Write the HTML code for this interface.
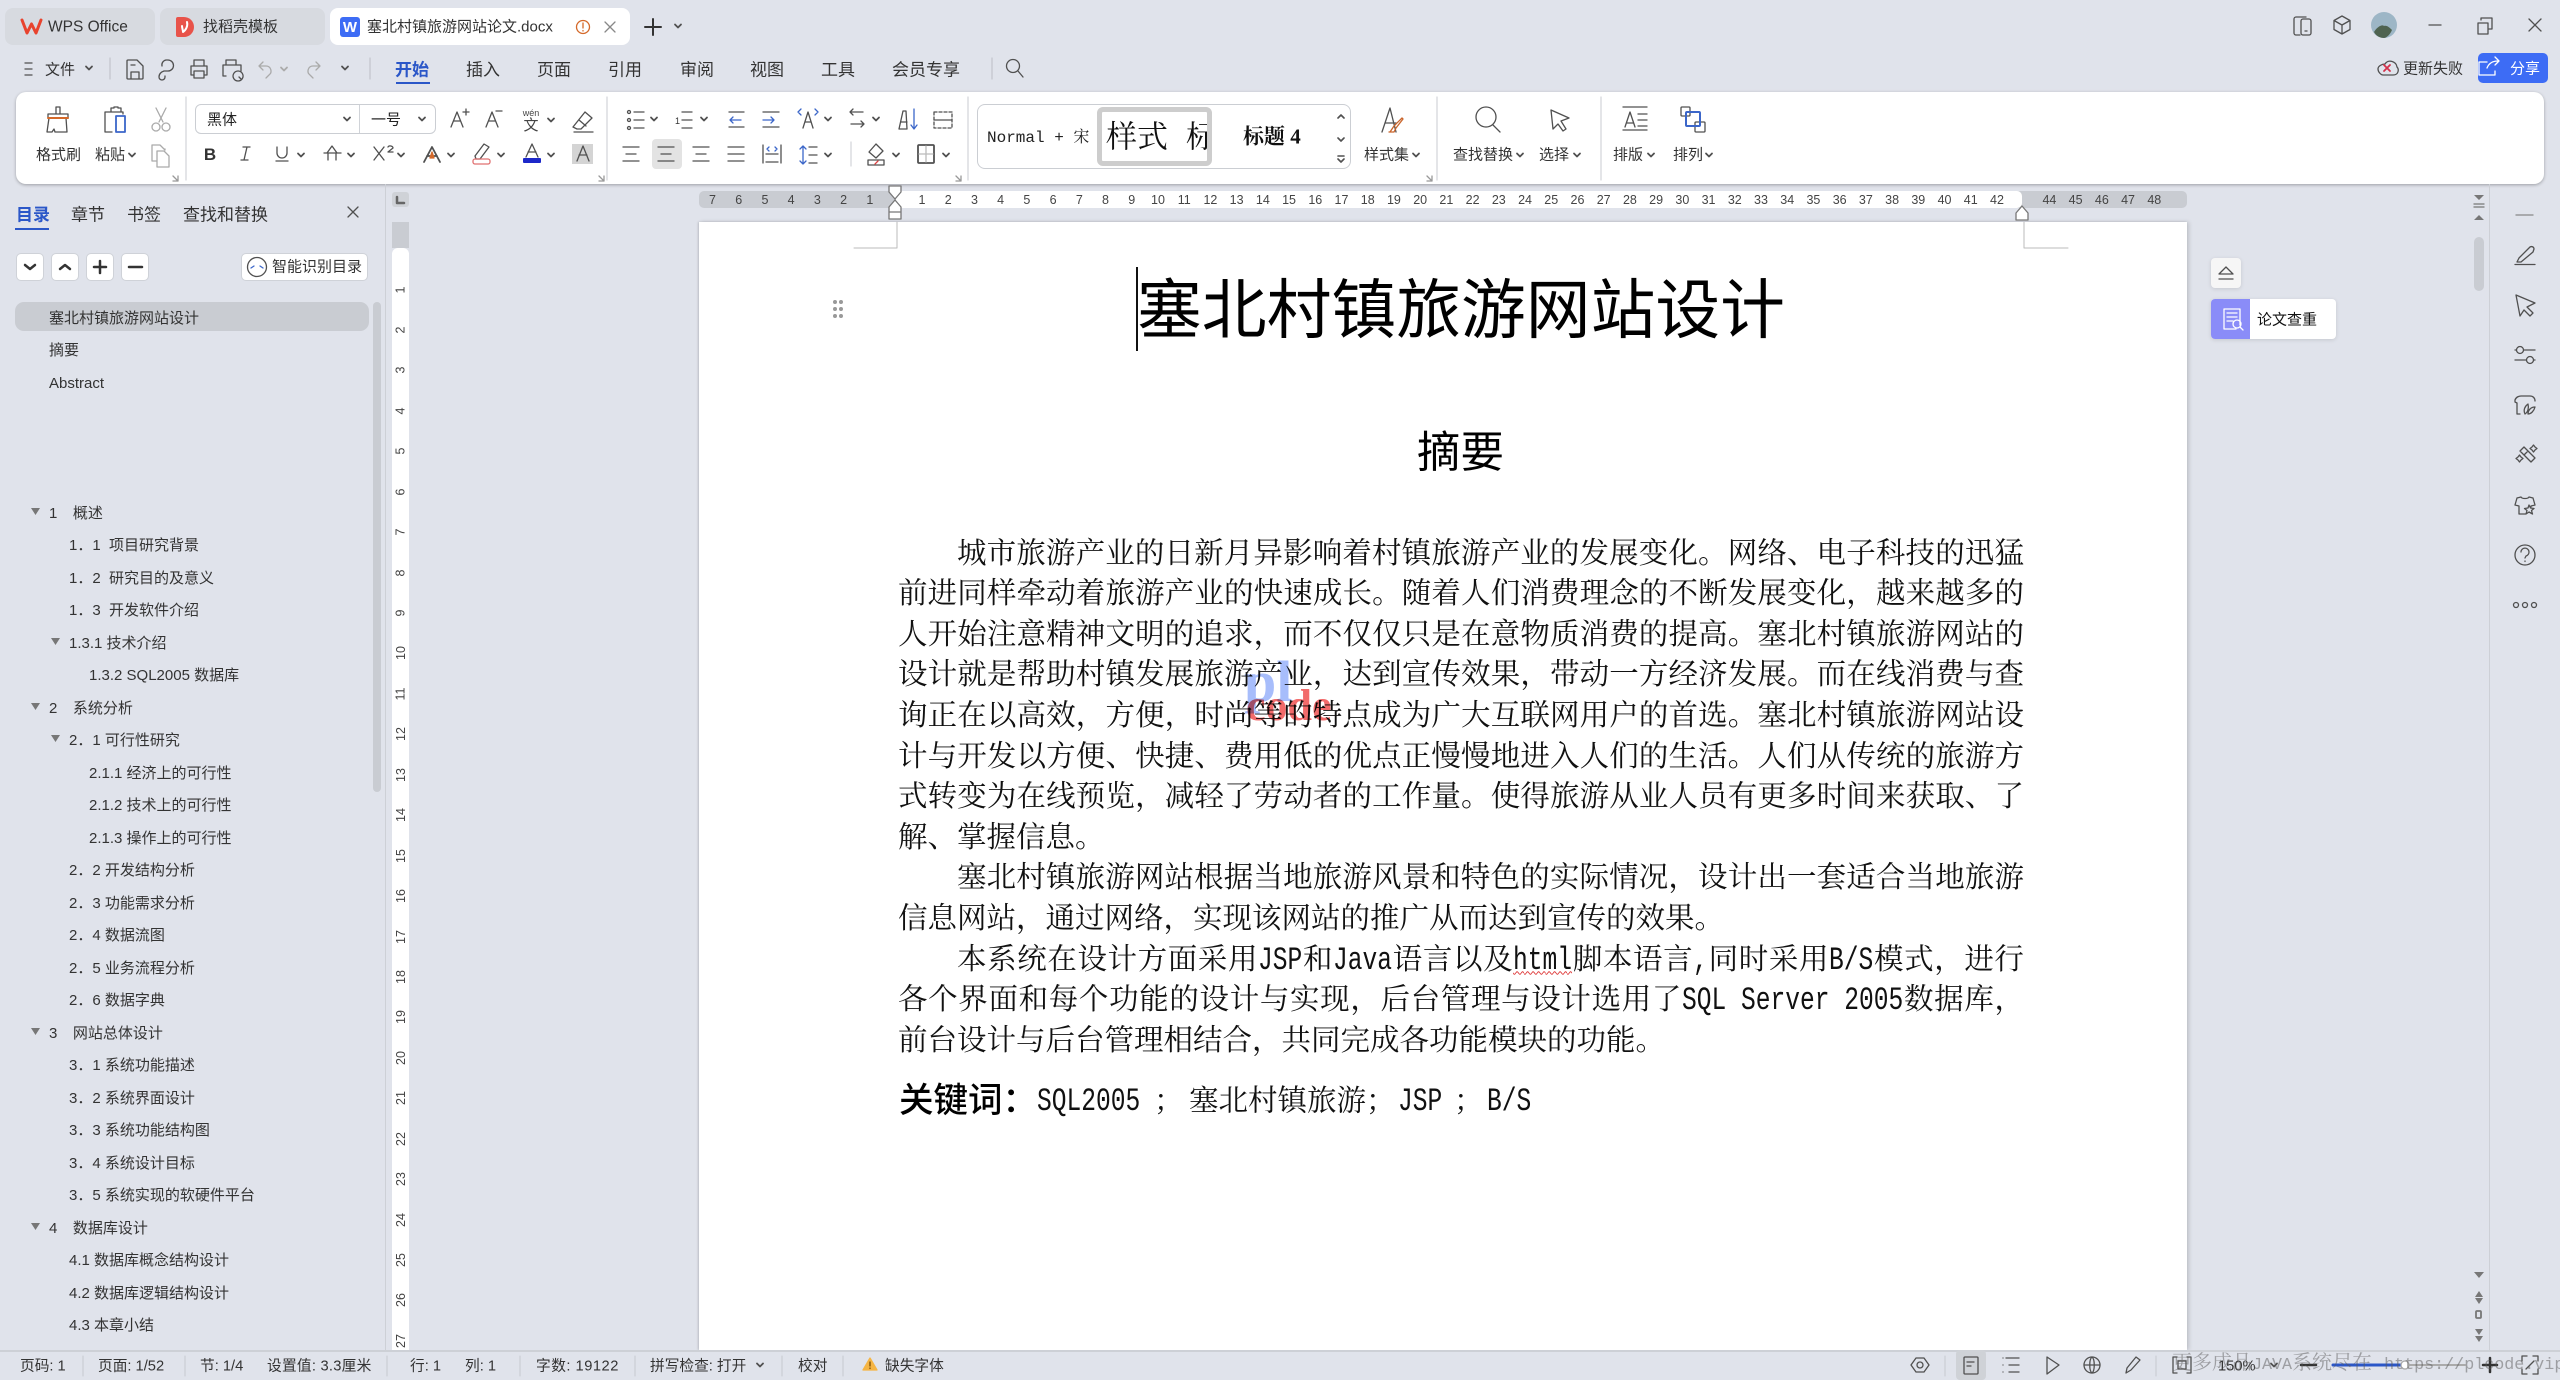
<!DOCTYPE html>
<html lang="zh"><head><meta charset="utf-8"><title>塞北村镇旅游网站论文.docx</title>
<style>
*{box-sizing:border-box}
html,body{margin:0;padding:0;width:2560px;height:1380px;overflow:hidden;background:#e0e3eb;font-family:"Liberation Sans","Noto Sans CJK SC",sans-serif;color:#333}
.a{position:absolute}
.t{position:absolute;white-space:nowrap;line-height:1;transform:translateY(-50%);font-size:15px;color:#333}
.m{font-size:17px}
.tab{position:absolute;top:8px;height:37px;border-radius:8px;background:#d7dae0}
#ribbon{position:absolute;left:16px;top:92px;width:2528px;height:92px;background:#fff;border-radius:10px;box-shadow:0 1px 3px rgba(0,0,0,.3)}
.dv{position:absolute;width:1px;background:#d0d3d8}
.btn{position:absolute;top:253px;width:28px;height:28px;background:#fff;border:1px solid #cfd2d8;border-radius:5px}
#toc{position:absolute;left:0;top:302.500px;width:370px;font-size:15px;line-height:32.5px;color:#333;height:1047px;overflow:hidden}
#toc div{height:32.5px;white-space:pre}
#toc i{font-style:normal;margin-left:15.5px}
.l0{padding-left:49px}.l1{padding-left:69px}.l2{padding-left:89px}
.rh{position:absolute;left:699px;top:191px;width:1488px;height:17px;background:#c9ccd2;border-radius:5px}
.nums{position:absolute;top:192px;height:17px;display:flex;font-size:12.5px;line-height:17px;color:#444}
.nums span{width:26.22px;flex:none;text-align:center}
#vnums{position:absolute;left:392px;top:269.3px;width:17px;font-size:12.5px;color:#444}
#vnums span{display:flex;height:40.45px;width:17px;align-items:center;justify-content:center}
#vnums i{font-style:normal;display:block;transform:rotate(-90deg)}
#page{position:absolute;left:699px;top:222px;width:1488px;height:1128px;background:#fff;box-shadow:-1px 0 2px rgba(0,0,0,.15),2px 0 4px rgba(0,0,0,.15)}
.ln{position:absolute;left:898px;width:1126px;height:40.6px;line-height:40.6px;font-size:29.5px;font-family:"Liberation Serif","Noto Serif CJK SC",serif;color:#111;white-space:nowrap;z-index:3}
.j{text-align:justify;text-align-last:justify;text-justify:inter-character;white-space:normal}
.ln b,.kw b{display:inline-block;font-family:"Liberation Mono",monospace;font-weight:400;font-size:32px;line-height:1;white-space:pre;transform:scaleX(.768);transform-origin:0 50%;text-align:left;text-align-last:left}
.hei{font-family:"Liberation Sans","Noto Sans CJK SC",sans-serif;color:#000}
.kw{position:absolute;top:1101.500px;transform:translateY(-50%);line-height:1;font-size:29.5px;font-family:"Liberation Serif","Noto Serif CJK SC",serif;color:#111;z-index:3;white-space:nowrap}
#status{position:absolute;left:0;top:1350px;width:2560px;height:30px;background:#e0e3eb;border-top:2px solid #cdd0d6;z-index:5}
.s{top:1367px;font-size:14.7px;z-index:6}
svg.o{position:absolute;left:0;top:0;z-index:7;pointer-events:none}
</style></head><body>

<div class="tab" style="left:5px;width:150px"></div>
<div class="tab" style="left:160px;width:165px"></div>
<div class="tab" style="left:330px;width:300px;background:#fff"></div>
<span class="t" style="left:48px;top:27px;font-size:15.5px">WPS Office</span>
<span class="t" style="left:203px;top:27px">找稻壳模板</span>
<span class="t" style="left:367px;top:27px">塞北村镇旅游网站论文.docx</span>

<span class="t" style="left:45px;top:69.500px">文件</span>
<span class="t m" style="left:395px;top:69.500px;color:#2b57c8;font-weight:700">开始</span>
<div class="a" style="left:396px;top:82px;width:34px;height:2px;background:#2b57c8"></div>
<span class="t m" style="left:466px;top:69.500px">插入</span>
<span class="t m" style="left:537px;top:69.500px">页面</span>
<span class="t m" style="left:608px;top:69.500px">引用</span>
<span class="t m" style="left:680px;top:69.500px">审阅</span>
<span class="t m" style="left:750px;top:69.500px">视图</span>
<span class="t m" style="left:821px;top:69.500px">工具</span>
<span class="t m" style="left:892px;top:69.500px">会员专享</span>
<span class="t" style="left:2403px;top:69px">更新失败</span>
<div class="a" style="left:2478px;top:53px;width:70px;height:30px;border-radius:5px;background:#3d6cf5"></div>
<span class="t" style="left:2510px;top:69px;color:#fff">分享</span>

<div id="ribbon"></div>
<div class="a" style="left:195px;top:104px;width:241px;height:30px;border:1px solid #cbced3;border-radius:6px"></div>
<div class="dv" style="left:359px;top:105px;height:28px"></div>
<span class="t" style="left:207px;top:120px;color:#222">黑体</span>
<span class="t" style="left:371px;top:120px;color:#222">一号</span>
<span class="t" style="left:36px;top:155px">格式刷</span>
<span class="t" style="left:95px;top:155px">粘贴</span>
<div class="a" style="left:652px;top:139px;width:30px;height:30px;background:#e3e3e3;border-radius:4px"></div>
<div class="a" style="left:572px;top:144px;width:21px;height:20px;background:#d4d4d4"></div>
<div class="a" style="left:977px;top:104px;width:374px;height:65px;border:1px solid #cbced3;border-radius:8px"></div>
<span class="t" style="left:987px;top:138px;font-family:'Liberation Mono','Noto Serif CJK SC',monospace;font-size:16px;color:#222">Normal + 宋</span>
<div class="a" style="left:1097px;top:107px;width:115px;height:59px;border:5px solid #cdcdcd;border-radius:6px;overflow:hidden">
 <span class="t" style="left:4px;top:25px;font-family:'Liberation Serif','Noto Serif CJK SC',serif;font-size:31px;color:#111">样式</span>
 <span class="t" style="left:84px;top:25px;font-family:'Liberation Serif','Noto Serif CJK SC',serif;font-size:31px;color:#111">标</span>
</div>
<span class="t" style="left:1243px;top:137px;font-family:'Liberation Serif','Noto Serif CJK SC',serif;font-size:21px;font-weight:700;color:#111">标题 4</span>
<span class="t" style="left:1364px;top:155px">样式集</span>
<span class="t" style="left:1453px;top:155px">查找替换</span>
<span class="t" style="left:1539px;top:155px">选择</span>
<span class="t" style="left:1613px;top:155px">排版</span>
<span class="t" style="left:1673px;top:155px">排列</span>

<!-- left pane -->
<div class="a" style="left:385px;top:184px;width:1px;height:1166px;background:#cdd0d6"></div>
<span class="t" style="left:16px;top:214.500px;font-size:17px;color:#2b57c8;font-weight:700">目录</span>
<div class="a" style="left:15px;top:228px;width:34px;height:2px;background:#2b57c8"></div>
<span class="t" style="left:71px;top:214.500px;font-size:17px">章节</span>
<span class="t" style="left:127px;top:214.500px;font-size:17px">书签</span>
<span class="t" style="left:183px;top:214.500px;font-size:17px">查找和替换</span>
<div class="btn" style="left:16px"></div><div class="btn" style="left:51px"></div><div class="btn" style="left:86px"></div><div class="btn" style="left:121px"></div>
<div class="btn" style="left:241px;width:127px"></div>
<span class="t" style="left:272px;top:267px;font-size:15px">智能识别目录</span>
<div class="a" style="left:15px;top:302px;width:354px;height:29px;background:#c9ccd2;border-radius:9px"></div>
<div class="a" style="left:373px;top:302px;width:8px;height:490px;background:#c9ccd2;border-radius:4px"></div>
<div id="toc">
<div class="l0">塞北村镇旅游网站设计</div>
<div class="l0">摘要</div>
<div class="l0">Abstract</div>
<div></div><div></div><div></div>
<div class="l0">1<i>概述</i></div>
<div class="l1">1．1  项目研究背景</div>
<div class="l1">1．2  研究目的及意义</div>
<div class="l1">1．3  开发软件介绍</div>
<div class="l1">1.3.1 技术介绍</div>
<div class="l2">1.3.2 SQL2005 数据库</div>
<div class="l0">2<i>系统分析</i></div>
<div class="l1">2．1 可行性研究</div>
<div class="l2">2.1.1 经济上的可行性</div>
<div class="l2">2.1.2 技术上的可行性</div>
<div class="l2">2.1.3 操作上的可行性</div>
<div class="l1">2．2 开发结构分析</div>
<div class="l1">2．3 功能需求分析</div>
<div class="l1">2．4 数据流图</div>
<div class="l1">2．5 业务流程分析</div>
<div class="l1">2．6 数据字典</div>
<div class="l0">3<i>网站总体设计</i></div>
<div class="l1">3．1 系统功能描述</div>
<div class="l1">3．2 系统界面设计</div>
<div class="l1">3．3 系统功能结构图</div>
<div class="l1">3．4 系统设计目标</div>
<div class="l1">3．5 系统实现的软硬件平台</div>
<div class="l0">4<i>数据库设计</i></div>
<div class="l1">4.1 数据库概念结构设计</div>
<div class="l1">4.2 数据库逻辑结构设计</div>
<div class="l1">4.3 本章小结</div>
</div>

<!-- vertical ruler -->
<div class="a" style="left:392px;top:192px;width:17px;height:15px;background:#cfd2d7;border-radius:3px"></div>
<div class="a" style="left:392px;top:222px;width:17px;height:26px;background:#c9ccd2"></div>
<div class="a" style="left:392px;top:248px;width:17px;height:1102px;background:#fff;border-radius:6px 6px 0 0"></div>
<div id="vnums"><span><i>1</i></span><span><i>2</i></span><span><i>3</i></span><span><i>4</i></span><span><i>5</i></span><span><i>6</i></span><span><i>7</i></span><span><i>8</i></span><span><i>9</i></span><span><i>10</i></span><span><i>11</i></span><span><i>12</i></span><span><i>13</i></span><span><i>14</i></span><span><i>15</i></span><span><i>16</i></span><span><i>17</i></span><span><i>18</i></span><span><i>19</i></span><span><i>20</i></span><span><i>21</i></span><span><i>22</i></span><span><i>23</i></span><span><i>24</i></span><span><i>25</i></span><span><i>26</i></span><span><i>27</i></span></div>

<!-- horizontal ruler -->
<div class="rh"></div>
<div class="a" style="left:896px;top:191px;width:1126px;height:17px;background:#fff;border-radius:0 5px 5px 0"></div>
<div class="nums" style="left:699.4px"><span>7</span><span>6</span><span>5</span><span>4</span><span>3</span><span>2</span><span>1</span></div>
<div class="nums" style="left:908.9px"><span>1</span><span>2</span><span>3</span><span>4</span><span>5</span><span>6</span><span>7</span><span>8</span><span>9</span><span>10</span><span>11</span><span>12</span><span>13</span><span>14</span><span>15</span><span>16</span><span>17</span><span>18</span><span>19</span><span>20</span><span>21</span><span>22</span><span>23</span><span>24</span><span>25</span><span>26</span><span>27</span><span>28</span><span>29</span><span>30</span><span>31</span><span>32</span><span>33</span><span>34</span><span>35</span><span>36</span><span>37</span><span>38</span><span>39</span><span>40</span><span>41</span><span>42</span><span></span><span>44</span><span>45</span><span>46</span><span>47</span><span>48</span></div>

<!-- page -->
<div id="page"></div>
<div class="a" style="left:1244px;top:653px;font:700 58px/1 'Liberation Serif',serif;color:#a7bdfb;z-index:4;mix-blend-mode:multiply">pl</div>
<div class="a" style="left:1246px;top:684px;font:700 44px/1 'Liberation Serif',serif;color:#f26b6b;z-index:4;mix-blend-mode:multiply">code</div>
<div class="a" style="left:1136px;top:267px;width:2px;height:84px;background:#111;z-index:3"></div>
<span class="t hei" style="left:1137px;top:310.500px;font-size:64.8px;z-index:3">塞北村镇旅游网站设计</span>
<span class="t hei" style="left:1417px;top:453.500px;font-size:43.5px;z-index:3">摘要</span>

<div class="ln j" style="top:533.500px;left:957px;width:1067px">城市旅游产业的日新月异影响着村镇旅游产业的发展变化。网络、电子科技的迅猛</div>
<div class="ln j" style="top:574.1px">前进同样牵动着旅游产业的快速成长。随着人们消费理念的不断发展变化，越来越多的</div>
<div class="ln j" style="top:614.7px">人开始注意精神文明的追求，而不仅仅只是在意物质消费的提高。塞北村镇旅游网站的</div>
<div class="ln j" style="top:655.3px">设计就是帮助村镇发展旅游产业，达到宣传效果，带动一方经济发展。而在线消费与查</div>
<div class="ln j" style="top:695.9px">询正在以高效，方便，时尚等的特点成为广大互联网用户的首选。塞北村镇旅游网站设</div>
<div class="ln j" style="top:736.5px">计与开发以方便、快捷、费用低的优点正慢慢地进入人们的生活。人们从传统的旅游方</div>
<div class="ln j" style="top:777.1px">式转变为在线预览，减轻了劳动者的工作量。使得旅游从业人员有更多时间来获取、了</div>
<div class="ln" style="top:817.7px">解、掌握信息。</div>
<div class="ln j" style="top:858.3px;left:957px;width:1067px">塞北村镇旅游网站根据当地旅游风景和特色的实际情况，设计出一套适合当地旅游</div>
<div class="ln" style="top:898.9px">信息网站，通过网络，实现该网站的推广从而达到宣传的效果。</div>
<div class="ln j" style="top:939.5px;left:957px;width:1067px">本系统在设计方面采用<b style="margin-right:-13.35px">JSP</b>和<b style="margin-right:-17.8px">Java</b>语言以及<b style="margin-right:-17.8px;text-decoration:underline wavy #d33 1px;text-underline-offset:2px">html</b>脚本语言<b style="margin-right:-4.45px">,</b>同时采用<b style="margin-right:-13.35px">B/S</b>模式，进行</div>
<div class="ln j" style="top:980.1px">各个界面和每个功能的设计与实现，后台管理与设计选用了<b style="margin-right:-66.75px">SQL Server 2005</b>数据库，</div>
<div class="ln" style="top:1020.7px">前台设计与后台管理相结合，共同完成各功能模块的功能。</div>

<span class="t hei" style="left:899px;top:1100.500px;font-size:34.5px;font-weight:500;z-index:3">关键词：</span>
<span class="kw" style="left:1037px"><b>SQL2005</b></span>
<span class="kw" style="left:1154px">；</span>
<span class="kw" style="left:1189px">塞北村镇旅游；</span>
<span class="kw" style="left:1398px"><b>JSP</b></span>
<span class="kw" style="left:1454px">；</span>
<span class="kw" style="left:1487px"><b>B/S</b></span>

<!-- floating right widgets -->
<div class="a" style="left:2489px;top:184px;width:1px;height:1166px;background:#cdd0d6"></div>
<div class="a" style="left:2474px;top:237px;width:10px;height:54px;background:#c9ccd2;border-radius:5px"></div>
<div class="a" style="left:2211px;top:258px;width:30px;height:30px;background:#f6f6f6;border-radius:4px;box-shadow:0 1px 4px rgba(0,0,0,.12)"></div>
<div class="a" style="left:2211px;top:299px;width:125px;height:40px;background:#fff;border-radius:4px;box-shadow:0 1px 4px rgba(0,0,0,.12)"></div>
<div class="a" style="left:2211px;top:299px;width:39px;height:40px;background:#8a8cf8;border-radius:4px 0 0 4px"></div>
<span class="t" style="left:2257px;top:319.500px;color:#111">论文查重</span>

<!-- status bar -->
<div id="status"></div>
<span class="t s" style="left:20px">页码: 1</span>
<span class="t s" style="left:98px">页面: 1/52</span>
<span class="t s" style="left:200px">节: 1/4</span>
<span class="t s" style="left:267px;letter-spacing:.25px">设置值: 3.3厘米</span>
<span class="t s" style="left:410px">行: 1</span>
<span class="t s" style="left:465px">列: 1</span>
<span class="t s" style="left:536px;letter-spacing:.5px">字数: 19122</span>
<span class="t s" style="left:650px">拼写检查: 打开</span>
<span class="t s" style="left:798px">校对</span>
<span class="t s" style="left:885px">缺失字体</span>
<div class="a" style="left:1956px;top:1350px;width:30px;height:30px;background:#cfd2d7;border-radius:4px;z-index:6"></div>
<span class="t s" style="left:2218px">150%</span>
<span class="t" style="left:2172px;top:1365px;font-family:'Liberation Mono','Noto Serif CJK SC',monospace;font-size:20px;color:rgba(90,90,90,.5);z-index:8">更多成品<span style="font-size:16.7px">JAVA</span>系统尽在 <span style="font-size:16.7px">https://plcode.vip</span></span>

<!-- icons -->
<svg class="o" width="2560" height="1380" viewBox="0 0 2560 1380" fill="none" stroke="#505050" stroke-width="1.3" stroke-linecap="round" stroke-linejoin="round">
<defs><path id="c" d="M-3-1.5 0 1.5 3-1.5" stroke-width="1.8"/></defs>
<!-- tabs -->
<path d="M22 20l5 13 4.500-9 4.500 9 5-13" stroke="#e8432e" stroke-width="3"/>
<path d="M178 17h6a10 10 0 0 1 0 20h-6a2 2 0 0 1-2-2v-16a2 2 0 0 1 2-2z" fill="#e8534a" stroke="none"/>
<path d="M187 22c1 4-1 8-4 10M182 26c0 2 1 4 1 6" stroke="#fff" stroke-width="2"/>
<rect x="340" y="17" width="20" height="20" rx="3" fill="#3d6cf5" stroke="none"/>
<text x="350" y="32" font-family="Liberation Sans" font-weight="700" font-size="15" fill="#fff" stroke="none" text-anchor="middle">W</text>
<circle cx="583" cy="27" r="6.500" stroke="#d4692a"/><path d="M583 23v5M583 30.500v.5" stroke="#d4692a"/>
<path d="M605 22l10 10M615 22l-10 10" stroke="#888"/>
<path d="M645 27h16M653 19v16" stroke="#333" stroke-width="2"/><use href="#c" x="678" y="26"/>
<!-- top right -->
<path d="M2306 17h-10a2 2 0 0 0-2 2v14a2 2 0 0 0 2 2h4"/><rect x="2301" y="19" width="10" height="16" rx="2"/><path d="M2305 31h2"/>
<path d="M2342 16l8 4.500v9l-8 4.500-8-4.500v-9zM2334 20.500l8 4.500 8-4.500M2342 25v9"/>
<circle cx="2384" cy="25" r="13" fill="#9db6c6" stroke="none"/><path d="M2374 32c3-5 8-8 10-6 3-1 6 2 8 4-2 5-6 8-8 8-4 0-8-2-10-6z" fill="#4f6350" stroke="none"/>
<path d="M2429 25h12"/><path d="M2478 23h10v11h-10zM2481 20v-2h11v11h-3"/><path d="M2529 19l12 12M2541 19l-12 12"/>
<path d="M2383 75h10c6 0 6-6 4-8-1-6-9-8-12-3-3 0-7 2-7 5 0 3 3 6 5 6z"/><path d="M2384 65l6 6M2390 65l-6 6" stroke="#d4304a" stroke-width="1.800"/>
<path d="M2487 62h-8v13h16v-4M2487 68c2-5 6-7 11-7M2495 57l4 4-4 4" stroke="#fff"/>
<!-- menu row -->
<path d="M25 63h7M25 69h7M25 75h7"/><use href="#c" x="89" y="68"/>
<path d="M110 58v21M370 58v21M992 58v21" stroke="#c4c7cd"/>
<path d="M127 61a1 1 0 0 1 1-1h9l6 6v12a1 1 0 0 1-1 1h-14a1 1 0 0 1-1-1zM131 79v-7h8v7M131 65h4"/>
<path d="M165 76v1a3 3 0 0 1-6 0c0-3 2-5 5-6h4a5 5 0 0 0 0-11h-2a5 5 0 0 0-4 6"/>
<path d="M194 66v-6h10v6M194 75h-3v-9h16v9h-3M194 71h10v7h-10z"/>
<path d="M226 76h-3v-11h18v6M226 65v-5h10v5M238 71a5 5 0 1 0 .1 0M241 79l-2-2"/>
<path d="M259 66h7a5 5 0 0 1 3 9l-3 3M259 66l4-4M259 66l4 4" stroke="#aaa"/><use href="#c" x="284" y="69" stroke="#aaa"/>
<path d="M320 66h-7a5 5 0 0 0-3 9l3 3M320 66l-4-4M320 66l-4 4" stroke="#aaa"/>
<use href="#c" x="345" y="68"/>
<circle cx="1013" cy="66" r="6.500"/><path d="M1018 71l5 6"/>
<!-- clipboard group -->
<g transform="translate(58 120)"><path d="M-2-13h4v7h-4zM-10-6h20v4h-20zM-9-2l-2 14h5l2-3 1 3h12l-1-14"/><path d="M-10-2h20" stroke="#d4692a" stroke-width="2"/></g>
<g transform="translate(115 120)"><path d="M-4-8h-6v20h7M-4-8v-4h3v-1h4v1h3v4zM6-8h2v2"/><rect x="1" y="-4" width="9" height="16" stroke="#3b66c9" stroke-width="1.800"/></g>
<g transform="translate(161 120)" stroke="#aaa"><path d="M-5-12l7 14M5-12l-7 14"/><circle cx="-5" cy="7" r="4"/><circle cx="5" cy="7" r="4"/></g>
<g transform="translate(161 155)" stroke="#aaa"><path d="M-9-10h8l5 5v-1M-9-10v16h4M-4-4h7l5 5v11h-12z"/></g>
<path d="M173 176l5 5M178 176v5h-5M599 176l5 5M604 176v5h-5M956 176l5 5M961 176v5h-5M1427 176l5 5M1432 176v5h-5" stroke="#999"/>
<path d="M186 97v83M607 97v83M968 97v83M1437 97v83M1601 97v83M851 142v24" stroke="#d5d7db"/>
<use href="#c" x="347" y="119"/><use href="#c" x="422" y="119"/>
<!-- font row 1 -->
<path d="M451 127l6-15 6 15M453.500 121h7M463 112h6M466 109v6"/>
<path d="M486 127l6-15 6 15M488.500 121h7M496 111h6"/>
<text x="531" y="116" font-size="9" text-anchor="middle" fill="#444" stroke="none" font-family="Liberation Sans">wén</text>
<text x="531" y="130" font-size="15" text-anchor="middle" fill="#444" stroke="none" font-family="Noto Sans CJK SC,sans-serif">文</text>
<use href="#c" x="551" y="120"/>
<path d="M573 127l12-15 7 6-11 11h-4zM579 120l7 6M574 132h19"/>
<use href="#c" x="132" y="155"/>
<use href="#c" x="301" y="155"/><use href="#c" x="351" y="155"/><use href="#c" x="401" y="155"/><use href="#c" x="451" y="155"/><use href="#c" x="501" y="155"/><use href="#c" x="551" y="155"/>
<!-- font row 2 -->
<text x="210" y="160" font-family="Liberation Sans" font-weight="700" font-size="17" text-anchor="middle" fill="#333" stroke="none">B</text>
<path d="M243 147h7M241 160h7M247 147l-3 13"/>
<path d="M277 147v6a5 5 0 0 0 10 0v-6M276 161h12"/>
<path d="M327 153l5-7 5 7M324 153h17M328 153v7M336 153v7"/>
<path d="M374 147l10 13M384 147l-10 13M388 147c1-2 5-1 5 1l-5 4h5"/>
<path d="M424 162l8-15 8 15M427 156h10" stroke-width="1.800"/><path d="M430 158l2-6 2 6z" fill="#d4692a" stroke="#d4692a"/>
<path d="M475 156l9-12 5 3-9 12h-4z"/><rect x="473" y="159" width="17" height="5" rx="2" stroke="#e07070"/>
<path d="M526 157l6-13 6 13M528 152h8"/><rect x="523" y="158" width="18" height="5" rx="1" fill="#1d28c9" stroke="none"/>
<path d="M577 161l6-15 6 15M579 155h8"/>
<!-- para row 1 -->
<g><circle cx="629" cy="112" r="1.500"/><circle cx="629" cy="120" r="1.500"/><circle cx="629" cy="128" r="1.500"/><path d="M634 112h10M634 120h10M634 128h10"/></g><use href="#c" x="654" y="119"/>
<path d="M682 112h10M682 120h10M682 128h10"/><text x="675" y="124" font-size="9" fill="#333" stroke="none" font-family="Liberation Sans">1</text><use href="#c" x="704" y="119"/>
<path d="M729 112h15M729 127h15"/><path d="M741 120h-11M733 117l-3 3 3 3" stroke="#3b66c9"/>
<path d="M763 112h16M763 127h16"/><path d="M763 120h11M771 117l3 3-3 3" stroke="#3b66c9"/>
<path d="M803 128l5-16 5 16M805 122h6"/><path d="M801 109l-3 3 3 3M815 109l3 3-3 3" stroke="#3b66c9"/><use href="#c" x="828" y="119"/>
<path d="M850 112h13M853 109l-3 3 3 3M864 124h-13M861 121l3 3-3 3"/><use href="#c" x="876" y="119"/>
<path d="M899 129l4-18h3l1 18zM901 122h6"/><path d="M914 109v20M911 125l3 4 3-4" stroke="#3b66c9"/>
<rect x="934" y="112" width="18" height="16" stroke-dasharray="3 2"/><path d="M934 120h18"/>
<!-- para row 2 -->
<path d="M623 147h16M626 154h10M623 161h16"/><path d="M658 147h16M661 154h10M658 161h16"/><path d="M693 147h16M696 154h10M693 161h16"/><path d="M728 147h16M728 154h16M728 161h16"/>
<path d="M763 145v18M781 145v18M766 154h12M766 162h12"/><path d="M769 147l-2 2 2 2M775 147l2 2-2 2" stroke="#3b66c9"/>
<path d="M803 146v18M800 149l3-3 3 3M800 161l3 3 3-3" stroke="#3b66c9"/><path d="M809 147h8M809 155h8M809 163h8"/><use href="#c" x="828" y="155"/>
<path d="M869 152l7-8 7 7-7 7zM868 160h16v5h-16z"/><path d="M875 164l3-3" stroke="#d44"/><use href="#c" x="896" y="155"/>
<rect x="918" y="145" width="16" height="18" rx="1" stroke-width="1.800"/><path d="M926 146v16M919 154h14" stroke="#bbb"/><use href="#c" x="946" y="155"/>
<!-- styles -->
<path d="M1338 118l3-3 3 3M1338 138l3 3 3-3M1338 156h6M1338 159l3 3 3-3" stroke-width="1.600"/>
<path d="M1382 132l8-24 6 24M1386 123h10"/><path d="M1390 132l4-6 8-8 1 1-7 9-2 4zM1389 132h5" stroke="#c9642a"/>
<use href="#c" x="1416" y="155"/>
<circle cx="1486" cy="117" r="10"/><path d="M1493 125l7 7"/><use href="#c" x="1520" y="155"/>
<path d="M1551 110l18 8-8 3 5 8-3 2-5-7-5 5z"/><use href="#c" x="1577" y="155"/>
<path d="M1623 107h24M1623 130h24"/><path d="M1625 127l5-15 5 15M1627 123h6M1638 114h9M1638 120h9M1638 126h9"/>
<use href="#c" x="1651" y="155"/>
<rect x="1681" y="107" width="9" height="9" rx="1"/><rect x="1695" y="122" width="10" height="10" rx="1"/><rect x="1686" y="112" width="14" height="14" rx="1" stroke="#3b66c9" stroke-width="2"/>
<use href="#c" x="1709" y="155"/>
<!-- left pane icons -->
<path d="M348 207l10 10M358 207l-10 10"/>
<path d="M25 265l5 4 5-4" stroke="#333" stroke-width="2.500"/><path d="M60 269l5-4 5 4" stroke="#333" stroke-width="2.500"/><path d="M94 267h12M100 261v12M129 267h13" stroke="#333" stroke-width="2.500"/>
<circle cx="257" cy="267" r="9.500"/><path d="M251 268l3-2M263 268l-3-2" stroke="#3b66c9"/>
<g fill="#777" stroke="none"><path d="M31 508h9l-4.500 7zM31 703h9l-4.500 7zM31 1028h9l-4.500 7zM31 1223h9l-4.500 7zM51 638h9l-4.500 7zM51 735h9l-4.500 7z"/></g>
<!-- rule L -->
<path d="M397 197v6h7" stroke="#666" stroke-width="2.500"/>
<!-- ruler handles -->
<path d="M889 186h12v6l-6 7-6-7zM889 212v-5l6-7 6 7v5zM889 212h12v7h-12z" fill="#fff" stroke="#777"/>
<path d="M2016 220v-7l6-7 6 7v7z" fill="#fff" stroke="#777"/>
<!-- page corners -->
<path d="M854 248h43v-26M2068 248h-44v-26" stroke="#bbb" stroke-width="1"/>
<g fill="#999" stroke="none"><circle cx="835" cy="302" r="2"/><circle cx="841" cy="302" r="2"/><circle cx="835" cy="309" r="2"/><circle cx="841" cy="309" r="2"/><circle cx="835" cy="316" r="2"/><circle cx="841" cy="316" r="2"/></g>
<!-- widget -->
<path d="M2219 274l7-7 7 7zM2219 279h14"/>
<path d="M2240 326v-16h-16v20h12" stroke="#fff" transform="translate(0 -1)"/><path d="M2227 313h10M2227 317h10M2227 321h6" stroke="#fff"/><circle cx="2237" cy="324" r="4" stroke="#fff"/><path d="M2240 327l3 3" stroke="#fff"/>
<!-- right scroll buttons -->
<g fill="#777" stroke="none"><path d="M2474 195h10l-5 5zM2474 220l5-5 5 5zM2474 1272h10l-5 6zM2475 1297l4-6 4 6zM2475 1298l4 6 4-6zM2475 1329l4 6 4-6zM2475 1336l4 6 4-6z"/></g>
<rect x="2476" y="1311" width="5" height="7" rx="1" stroke="#777" stroke-width="1.800"/>
<path d="M2474 204h10M2474 207h10" stroke="#777"/>
<!-- right sidebar -->
<path d="M2516 215h17" stroke="#888"/>
<path d="M2515 264.500h20M2517 262l2-4 11-11c2-1 4 0 4 2l-1 3-12 10z"/>
<path d="M2516 295l19 8-8 4 6 6-3 3-6-6-4 6z"/>
<path d="M2515 350h20M2515 360h20"/><circle cx="2520" cy="350" r="3.500" fill="#e0e3eb"/><circle cx="2530" cy="360" r="3.500" fill="#e0e3eb"/>
<path d="M2520 414h-3v-11l-2-1v-2c1-3 4-4 6-4h9c3 0 5 2 5 5M2525 414c-2-4 0-8 3-10 1 4 0 8-3 10zM2528 414c3 0 6-3 7-7-4 0-7 3-7 7z"/>
<path d="M2520 451l4-4 11 11-4 4zM2524 455l4-4M2532 447l1.500-2 1.500 2 2 1.500-2 1.500-1.500 2-1.500-2-2-1.500zM2518 457l1.500-2 1.500 2 2 1.500-2 1.500-1.500 2-1.500-2-2-1.500z"/>
<path d="M2521 497l-4 1-2 7 4 1v8h7M2529 497l4 1 2 7-4 1v1M2521 497c1 2 7 2 8 0M2529 505l1.500 3 3.500.5-2.500 2 1 3.500-3.500-2-3 2 1-3.500-2.500-2 3.500-.5z"/>
<circle cx="2525" cy="555" r="10"/><path d="M2521 552a4 4 0 1 1 5 4l-1 2M2525 561v.5"/>
<circle cx="2516" cy="605" r="2.500"/><circle cx="2525" cy="605" r="2.500"/><circle cx="2534" cy="605" r="2.500"/>
<!-- status icons -->
<path d="M83 1356v20M185 1356v20M387 1356v20M520 1356v20M635 1356v20M782 1356v20M843 1356v20M1945 1356v20M2156 1356v20" stroke="#c6c9cf" stroke-width="1"/>
<use href="#c" x="760" y="1365"/>
<path d="M870 1358l7 12h-14z" fill="#f5b544" stroke="#f5b544"/><path d="M870 1362v4M870 1368v.5" stroke="#7a4a00"/>
<path d="M1911 1365l5-7h8l5 7-5 7h-8z"/><circle cx="1920" cy="1365" r="3"/>
<rect x="1964" y="1357" width="14" height="17" rx="1"/><path d="M1967 1362h7M1967 1366h4"/>
<path d="M2006 1358h13M2009 1365h10M2009 1372h10M2003 1358h0M2003 1365h0M2003 1372h0"/>
<path d="M2047 1357l12 8-12 9z"/>
<circle cx="2092" cy="1365" r="8"/><path d="M2084 1365h16M2092 1357c-3 2-3 14 0 16M2092 1357c3 2 3 14 0 16"/>
<path d="M2126 1373l1-5 9-11 4 3-9 10z"/>
<path d="M2177 1357h-4v16h4M2187 1357h4v16h-4"/><rect x="2178" y="1361" width="8" height="8"/>
<use href="#c" x="2274" y="1365"/>
<path d="M2301 1365h15M2483 1365h14M2490 1358v14" stroke="#333" stroke-width="2.500"/>
<path d="M2333 1365h69" stroke="#2b57c8" stroke-width="3"/><path d="M2408 1365h57" stroke="#aaa" stroke-width="2"/><circle cx="2405" cy="1365" r="4" fill="#fff" stroke="#aaa"/>
<path d="M2522 1356v5M2522 1356h5M2538 1356h-5M2538 1356v5M2522 1374v-5M2522 1374h5M2538 1374h-5M2538 1374v-5M2526 1369l8-8"/>
</svg>
</body></html>
